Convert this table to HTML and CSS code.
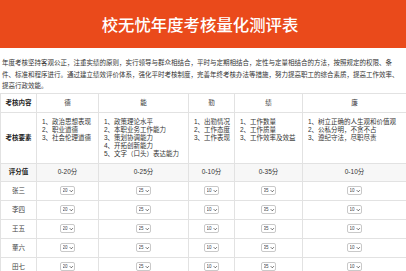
FILE: index.html
```html
<!DOCTYPE html>
<html>
<head>
    <meta charset="utf-8">
    <title>校无忧年度考核量化测评表</title>
    <link rel="stylesheet" href="styles.css">
</head>
<body>
    <div class="banner">
        <h1>校无忧年度考核量化测评表</h1>
    </div>

    <p class="intro">年度考核坚持客观公正，注重实绩的原则，实行领导与群众相结合，平时与定期相结合，定性与定量相结合的方法，按照规定的权限、条件、标准和程序进行。通过建立绩效评价体系，强化平时考核制度，完善年终考核办法等措施，努力提高职工的综合素质，提高工作效率、提高行政效能。</p>

    <table class="score-table">
        <colgroup>
            <col class="col-label">
            <col class="col-de">
            <col class="col-neng">
            <col class="col-qin">
            <col class="col-ji">
            <col class="col-lian">
        </colgroup>
        <tr class="head-row">
            <th>考核内容</th>
            <th class="plain">德</th>
            <th class="plain">能</th>
            <th class="plain">勤</th>
            <th class="plain">绩</th>
            <th class="plain">廉</th>
        </tr>
        <tr class="items-row">
            <th>考核要素</th>
            <td>
                <ul class="items">
                    <li>1、政治思想表现</li>
                    <li>2、职业道德</li>
                    <li>3、社会伦理道德</li>
                </ul>
            </td>
            <td>
                <ul class="items">
                    <li>1、政策理论水平</li>
                    <li>2、本职业务工作能力</li>
                    <li>3、策划协调能力</li>
                    <li>4、开拓创新能力</li>
                    <li>5、文字（口头）表达能力</li>
                </ul>
            </td>
            <td>
                <ul class="items">
                    <li>1、出勤情况</li>
                    <li>2、工作态度</li>
                    <li>3、工作表现</li>
                </ul>
            </td>
            <td>
                <ul class="items">
                    <li>1、工作数量</li>
                    <li>2、工作质量</li>
                    <li>3、工作效率及效益</li>
                </ul>
            </td>
            <td>
                <ul class="items">
                    <li>1、树立正确的人生观和价值观</li>
                    <li>2、公私分明，不贪不占</li>
                    <li>3、遵纪守法，尽职尽责</li>
                </ul>
            </td>
        </tr>
        <tr class="range-row">
            <th>评分值</th>
            <td>0-20分</td>
            <td>0-25分</td>
            <td>0-10分</td>
            <td>0-35分</td>
            <td>0-10分</td>
        </tr>
    </table>

    <script>
        const names = ['张三', '李四', '王五', '董六', '田七'];
        const maxes = [20, 25, 10, 35, 10];
        const table = document.querySelector('.score-table');

        names.forEach(function(name) {
            const row = document.createElement('tr');
            row.className = 'person-row';
            let html = '<td class="name">' + name + '</td>';
            maxes.forEach(function(max) {
                let options = '';
                for (let i = max; i >= 0; i--) {
                    options += '<option>' + i + '</option>';
                }
                html += '<td><span class="pick"><select>' + options + '</select>' +
                    '<svg viewBox="0 0 6 4" width="5" height="4"><path d="M1 1 L3 3 L5 1" fill="none" stroke="#444" stroke-width="1.1"/></svg></span></td>';
            });
            row.innerHTML = html;
            table.appendChild(row);
        });
    </script>
</body>
</html>
```

FILE: styles.css
```css
* {
    margin: 0;
    padding: 0;
    box-sizing: border-box;
}

body {
    font-family: "Liberation Sans", "Noto Sans CJK SC", sans-serif;
    color: #333;
    background: #fff;
}

/* Banner */
.banner {
    background: #ea4a1b;
    height: 48px;
    padding: 1px 6px 0 0;
    text-align: center;
}

.banner h1 {
    color: #fff;
    font-family: "Noto Sans CJK SC", sans-serif;
    font-size: 16.4px;
    font-weight: 500;
    line-height: 46px;
}

.intro {
    font-size: 6.5px;
    line-height: 11.5px;
    padding: 0 2px;
    margin: 9px 0 1px;
}

/* Table */
.score-table {
    width: 406px;
    table-layout: fixed;
    border-collapse: collapse;
    font-size: 6.5px;
}

.col-label { width: 36px; }
.col-de { width: 62px; }
.col-neng { width: 90px; }
.col-qin { width: 46px; }
.col-ji { width: 68px; }
.col-lian { width: 104px; }

.score-table th,
.score-table td {
    border: 1px solid #e2e2e2;
    text-align: center;
    vertical-align: middle;
    line-height: 8px;
    padding: 0 3px;
}

.score-table th {
    font-weight: bold;
    color: #222;
}

.score-table th.plain {
    font-weight: normal;
    color: #333;
}

.head-row {
    height: 19px;
}

.items-row {
    height: 51px;
}

.items-row td {
    vertical-align: top;
    text-align: left;
    padding: 5px 3px 4px 5px;
}

.items {
    list-style: none;
}

.range-row {
    height: 18px;
    background: #f7f7f7;
}

.person-row {
    height: 19px;
}

.person-row .name {
    color: #444;
}

/* Score picker */
.pick {
    display: inline-flex;
    align-items: center;
    width: 15px;
    height: 9px;
    border: 1px solid #c9c9c9;
    border-radius: 2px;
    background: #fff;
    vertical-align: middle;
}

.pick select {
    appearance: none;
    -webkit-appearance: none;
    border: none;
    background: transparent;
    font-family: "Liberation Sans", sans-serif;
    font-size: 4.5px;
    color: #444;
    width: 9px;
    height: 7px;
    padding: 0 0 0 1.5px;
    outline: none;
}

.pick svg {
    display: block;
}
```
